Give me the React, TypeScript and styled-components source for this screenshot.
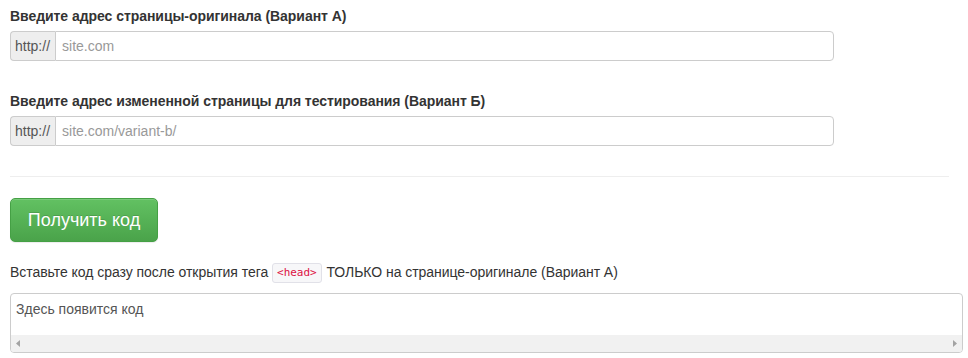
import * as React from 'react';
import styled, { createGlobalStyle } from 'styled-components';

const GlobalStyle = createGlobalStyle`
	html, body {
		margin: 0;
		padding: 0;
		background: #fff;
	}
	body {
		font-family: "Liberation Sans", Arial, sans-serif;
		font-size: 14px;
		line-height: 20px;
		color: #333;
	}
	* {
		box-sizing: border-box;
	}
`;

const Page = styled.div`
	padding: 6px 0 0 10px;
	width: 968px;
`;

const FormGroup = styled.div<{ $gap?: number }>`
	margin-bottom: ${(p) => p.$gap ?? 0}px;
`;

const Label = styled.label`
	display: block;
	font-weight: bold;
	font-size: 14px;
	line-height: 20px;
	margin-bottom: 5px;
	color: #333;
	letter-spacing: -0.05px;
`;

const InputGroup = styled.div`
	display: flex;
	width: 824px;
	height: 30px;
`;

const Addon = styled.span`
	display: flex;
	align-items: center;
	padding: 0 5px 0 4px;
	background: #eee;
	border: 1px solid #ccc;
	border-right: 0;
	border-radius: 4px 0 0 4px;
	color: #555;
	font-size: 14px;
`;

const TextInput = styled.input`
	flex: 1;
	min-width: 0;
	height: 30px;
	padding: 0 6px;
	border: 1px solid #ccc;
	border-radius: 0 4px 4px 0;
	font-family: "Liberation Sans", Arial, sans-serif;
	font-size: 14px;
	color: #555;
	outline: none;
	&::placeholder {
		color: #999;
	}
`;

const Divider = styled.hr`
	width: 939px;
	margin: 0 0 21px 0;
	border: 0;
	border-top: 1px solid #eee;
`;

const SubmitButton = styled.button`
	display: block;
	width: 148px;
	height: 44px;
	padding: 0;
	border: 1px solid #45a045;
	border-radius: 5px;
	background-image: linear-gradient(to bottom, #62c162 0%, #4aa34a 100%);
	color: #fff;
	font-family: "Liberation Sans", Arial, sans-serif;
	font-size: 18px;
	text-shadow: 0 -1px 0 rgba(0, 0, 0, 0.15);
	box-shadow: inset 0 1px 0 rgba(255, 255, 255, 0.15), 0 1px 1px rgba(0, 0, 0, 0.075);
	cursor: pointer;
`;

const Hint = styled.p`
	margin: 20px 0 10px 0;
	font-size: 14px;
	line-height: 20px;
	color: #333;
	letter-spacing: -0.04px;
`;

const Tag = styled.code`
	display: inline-block;
	padding: 0 4px;
	margin: 0 1px 0 0;
	line-height: 18px;
	font-family: "DejaVu Sans Mono", "Liberation Mono", monospace;
	font-size: 11px;
	color: #d14;
	background: #f7f7f9;
	border: 1px solid #e1e1e8;
	border-radius: 3px;
	vertical-align: 1px;
`;

const CodeBox = styled.div`
	display: flex;
	flex-direction: column;
	width: 953px;
	height: 60px;
	border: 1px solid #ccc;
	border-radius: 4px;
	overflow: hidden;
	background: #fff;
`;

const CodeText = styled.div`
	flex: 1;
	padding: 5px 5px;
	font-size: 14px;
	line-height: 20px;
	color: #555;
	white-space: pre;
`;

const ScrollTrack = styled.div`
	display: flex;
	align-items: center;
	justify-content: space-between;
	height: 17px;
	padding: 0 5px;
	background: #f1f1f1;
`;

const Arrow = ({ dir }: { dir: 'left' | 'right' }) => (
	<svg width="4" height="7" viewBox="0 0 4 7">
		<path d={dir === 'left' ? 'M4 0 L0 3.5 L4 7 Z' : 'M0 0 L4 3.5 L0 7 Z'} fill="#a3a3a3" />
	</svg>
);

export default function App() {
	return (
		<>
			<GlobalStyle />
			<Page>
				<FormGroup $gap={30}>
					<Label>Введите адрес страницы-оригинала (Вариант А)</Label>
					<InputGroup>
						<Addon>http://</Addon>
						<TextInput placeholder="site.com" />
					</InputGroup>
				</FormGroup>
				<FormGroup $gap={30}>
					<Label>Введите адрес измененной страницы для тестирования (Вариант Б)</Label>
					<InputGroup>
						<Addon>http://</Addon>
						<TextInput placeholder="site.com/variant-b/" />
					</InputGroup>
				</FormGroup>
				<Divider />
				<SubmitButton>Получить код</SubmitButton>
				<Hint>
					Вставьте код сразу после открытия тега <Tag>&lt;head&gt;</Tag> ТОЛЬКО на странице-оригинале (Вариант А)
				</Hint>
				<CodeBox>
					<CodeText>Здесь появится код</CodeText>
					<ScrollTrack>
						<Arrow dir="left" />
						<Arrow dir="right" />
					</ScrollTrack>
				</CodeBox>
			</Page>
		</>
	);
}
